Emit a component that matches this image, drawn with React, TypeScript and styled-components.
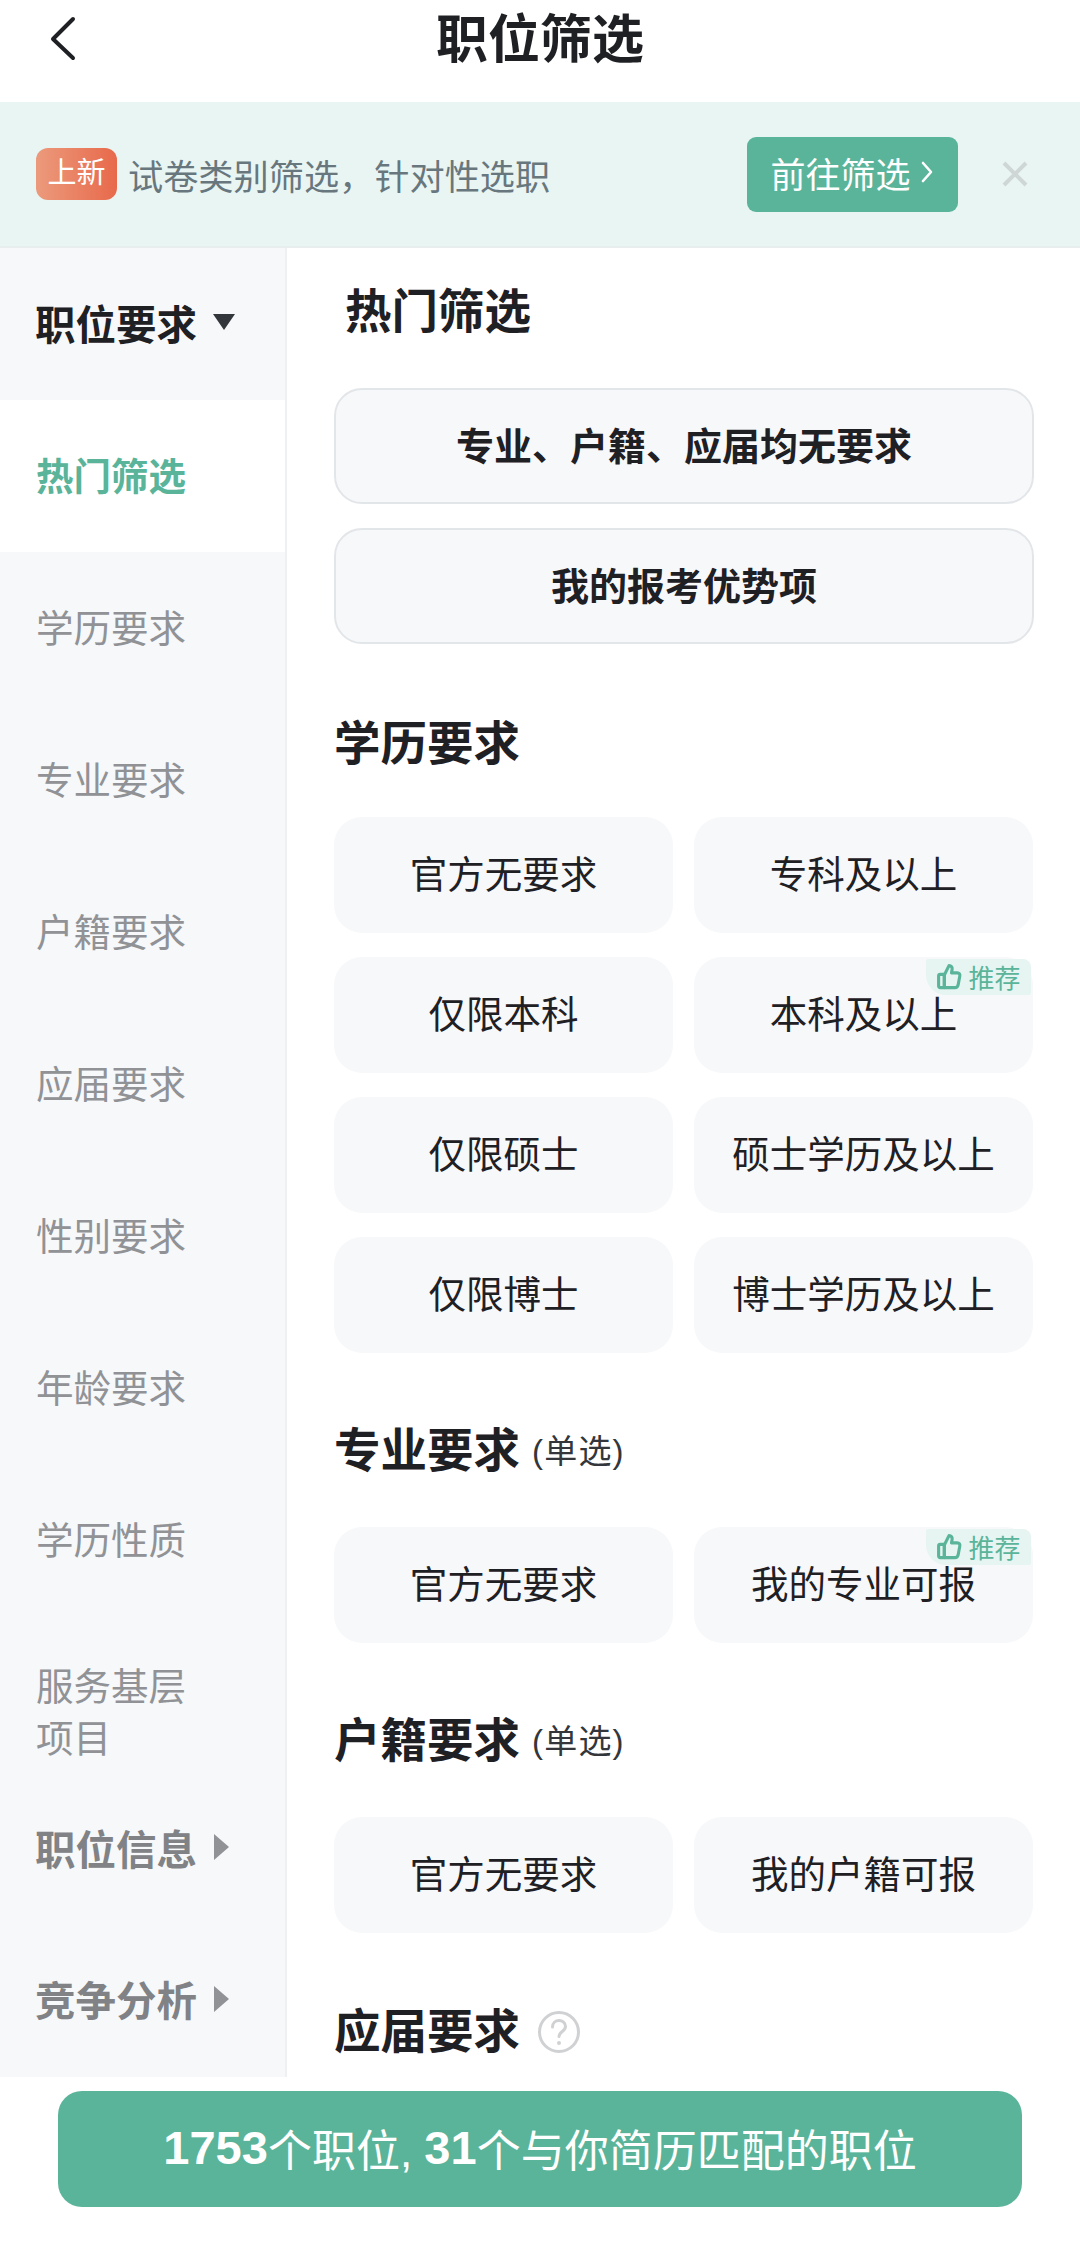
import { FunctionComponent, ReactNode } from 'react';
import styled, { createGlobalStyle } from 'styled-components';

const GlobalStyle = createGlobalStyle`
	html,
	body {
		margin: 0;
		padding: 0;
		background: #fff;
		font-family: 'Liberation Sans', 'Noto Sans CJK SC', sans-serif;
	}
	* {
		box-sizing: border-box;
	}
`;

const Page = styled.div`
	width: 1080px;
	height: 2250px;
	display: flex;
	flex-direction: column;
	overflow: hidden;
	background: #fff;
	color: #1f2024;
`;

const Header = styled.header`
	height: 102px;
	flex: none;
	position: relative;
	display: flex;
	justify-content: center;
	padding-top: 8px;
	font-size: 52px;
	line-height: 64px;
	font-weight: 700;
`;

const BackIcon = styled.svg`
	position: absolute;
	left: 48px;
	top: 16px;
	width: 32px;
	height: 46px;
`;

const Banner = styled.div`
	height: 146px;
	flex: none;
	display: flex;
	align-items: center;
	padding: 0 0 0 36px;
	background: #e9f5f3;
	border-bottom: 2px solid #e8eeee;
`;

const NewBadge = styled.span`
	width: 81px;
	height: 52px;
	border-radius: 12px;
	background: linear-gradient(90deg, #ec9a7c, #e8694b);
	color: #fff;
	font-size: 29px;
	line-height: 50px;
	text-align: center;
`;

const BannerText = styled.span`
	margin-left: 11px;
	font-size: 35.2px;
	color: #68777d;
	width: 619px;
	white-space: nowrap;
`;

const GoButton = styled.button`
	width: 211px;
	height: 75px;
	padding: 0 2px 4px 0;
	display: flex;
	align-items: center;
	justify-content: center;
	gap: 10px;
	border: none;
	border-radius: 9px;
	background: #5ab49a;
	color: #fff;
	font: inherit;
	font-size: 35px;
`;

const CloseIcon = styled.svg`
	width: 26px;
	height: 26px;
	margin-left: 44px;
`;

const Body = styled.div`
	flex: none;
	height: 1829px;
	display: flex;
	overflow: hidden;
`;

const Sidebar = styled.nav`
	width: 287px;
	flex: none;
	background: #f6f8fa;
	border-right: 2px solid #eef0f2;
`;

const Group = styled.div<{ $muted?: boolean; $height: number }>`
	height: ${p => p.$height}px;
	display: flex;
	align-items: center;
	gap: 15px;
	padding: 0 0 4px 35px;
	font-size: 40.5px;
	font-weight: 700;
	color: ${p => (p.$muted ? '#808285' : '#1f2024')};
`;

const NavItem = styled.div<{ $active?: boolean; $height?: number }>`
	height: ${p => p.$height ?? 152}px;
	display: flex;
	align-items: center;
	padding: 2px 90px 0 36px;
	font-size: 37.5px;
	line-height: 52px;
	font-weight: ${p => (p.$active ? 700 : 400)};
	color: ${p => (p.$active ? '#5ab49a' : '#909296')};
	background: ${p => (p.$active ? '#fff' : 'transparent')};
`;

const Content = styled.main`
	flex: 1;
	padding: 36px 46px 0 47px;
	overflow: hidden;
`;

const SectionTitle = styled.h2<{ $inset?: boolean; $gap: number }>`
	margin: 0 0 ${p => p.$gap}px;
	padding-left: ${p => (p.$inset ? 11 : 0)}px;
	height: 56px;
	display: flex;
	align-items: center;
	gap: 12px;
	font-size: 46.5px;
	line-height: 56px;
	font-weight: 700;
`;

const TitleNote = styled.span`
	font-size: 33px;
	font-weight: 400;
	letter-spacing: 1.2px;
	margin-top: 2px;
	color: #33363a;
`;

const HotList = styled.div`
	display: flex;
	flex-direction: column;
	gap: 24px;
	margin-bottom: 72px;
`;

const HotButton = styled.div`
	height: 116px;
	display: flex;
	align-items: center;
	justify-content: center;
	padding-bottom: 5px;
	border: 2px solid #e3e6e9;
	border-radius: 28px;
	background: #f7f8fa;
	font-size: 38px;
	font-weight: 700;
`;

const OptionGrid = styled.div<{ $after: number }>`
	display: grid;
	grid-template-columns: 339px 339px;
	gap: 24px 21px;
	margin-bottom: ${p => p.$after}px;
`;

const Option = styled.div`
	position: relative;
	height: 116px;
	display: flex;
	align-items: center;
	justify-content: center;
	padding: 0 0 8px 0;
	border-radius: 28px;
	background: #f7f8fa;
	font-size: 37.5px;
`;

const RecommendTag = styled.span`
	position: absolute;
	right: 2px;
	top: 2px;
	width: 105px;
	height: 36px;
	display: flex;
	align-items: center;
	justify-content: center;
	gap: 6px;
	padding-bottom: 2px;
	border-radius: 2px 8px 2px 20px;
	background: #e6f5f1;
	color: #5ab49a;
	font-size: 26px;
`;

const ThumbIcon = styled.svg`
	width: 26px;
	height: 27px;
`;

const HelpIcon = styled.svg`
	width: 44px;
	height: 44px;
	margin-left: 5px;
`;

const Footer = styled.div`
	flex: none;
	padding: 14px 58px 0;
`;

const SubmitButton = styled.div`
	height: 116px;
	display: flex;
	align-items: center;
	justify-content: center;
	padding-bottom: 3px;
	border-radius: 24px;
	background: #5ab49a;
	color: #fff;
	font-size: 44px;
	white-space: pre;
`;

const Strong = styled.b`
	font-size: 47px;
`;

const Triangle = ({ dir, color }: { dir: 'down' | 'right'; color: string }) => (
	<svg width={dir === 'down' ? 24 : 18} height={dir === 'down' ? 18 : 28} viewBox={dir === 'down' ? '0 0 24 18' : '0 0 18 28'}>
		<path d={dir === 'down' ? 'M1 1h22L12 17z' : 'M2 1l15 13L2 27z'} fill={color} />
	</svg>
);

const OptionCard: FunctionComponent<{ label: string; recommended?: boolean }> = ({ label, recommended }) => (
	<Option>
		{label}
		{recommended && (
			<RecommendTag>
				<ThumbIcon viewBox="0 0 24 26" fill="none" stroke="#5ab49a" strokeWidth="3" strokeLinejoin="round" strokeLinecap="round">
					<path d="M7.5 11.5L12 2.5c2.2 0 3.4 1.6 3 3.8L14.4 9.5H20c1.8 0 2.8 1.4 2.4 3l-1.6 8.6c-.4 1.6-1.4 2.6-3 2.6H7.5z" />
					<path d="M2 12.5c0-1 .6-1.6 1.6-1.6h3.9v12.8H3.6c-1 0-1.6-.6-1.6-1.6z" />
				</ThumbIcon>
				推荐
			</RecommendTag>
		)}
	</Option>
);

const Section: FunctionComponent<{ title: ReactNode; after: number; gap: number; children: ReactNode }> = ({ title, after, gap, children }) => (
	<>
		<SectionTitle $gap={gap}>{title}</SectionTitle>
		<OptionGrid $after={after}>{children}</OptionGrid>
	</>
);

const navItems = ['学历要求', '专业要求', '户籍要求', '应届要求', '性别要求', '年龄要求', '学历性质'];

export default function App() {
	return (
		<Page>
			<GlobalStyle />
			<Header>
				<BackIcon viewBox="0 0 32 46" fill="none" stroke="#1f2024" strokeWidth="4" strokeLinecap="round" strokeLinejoin="round">
					<path d="M25 3L5 23l20 19" />
				</BackIcon>
				职位筛选
			</Header>
			<Banner>
				<NewBadge>上新</NewBadge>
				<BannerText>试卷类别筛选，针对性选职</BannerText>
				<GoButton>
					前往筛选
					<svg width="12" height="24" viewBox="0 0 12 24" fill="none" stroke="#fff" strokeWidth="2.6" strokeLinecap="round" strokeLinejoin="round">
						<path d="M2 3l8 9-8 9" />
					</svg>
				</GoButton>
				<CloseIcon viewBox="0 0 26 26" fill="none" stroke="#cfd6d6" strokeWidth="4">
					<path d="M2 2l22 22M24 2L2 24" />
				</CloseIcon>
			</Banner>
			<Body>
				<Sidebar>
					<Group $height={152}>
						职位要求
						<Triangle dir="down" color="#33363a" />
					</Group>
					<NavItem $active>热门筛选</NavItem>
					{navItems.map(item => (
						<NavItem key={item}>{item}</NavItem>
					))}
					<NavItem $height={192}>服务基层项目</NavItem>
					<Group $muted $height={82}>
						职位信息
						<Triangle dir="right" color="#909296" />
					</Group>
					<Group $muted $height={221}>
						竞争分析
						<Triangle dir="right" color="#909296" />
					</Group>
				</Sidebar>
				<Content>
					<SectionTitle $inset $gap={48}>
						热门筛选
					</SectionTitle>
					<HotList>
						<HotButton>专业、户籍、应届均无要求</HotButton>
						<HotButton>我的报考优势项</HotButton>
					</HotList>
					<Section title="学历要求" gap={45} after={70}>
						<OptionCard label="官方无要求" />
						<OptionCard label="专科及以上" />
						<OptionCard label="仅限本科" />
						<OptionCard label="本科及以上" recommended />
						<OptionCard label="仅限硕士" />
						<OptionCard label="硕士学历及以上" />
						<OptionCard label="仅限博士" />
						<OptionCard label="博士学历及以上" />
					</Section>
					<Section
						title={
							<>
								专业要求<TitleNote>(单选)</TitleNote>
							</>
						}
						gap={48}
						after={70}
					>
						<OptionCard label="官方无要求" />
						<OptionCard label="我的专业可报" recommended />
					</Section>
					<Section
						title={
							<>
								户籍要求<TitleNote>(单选)</TitleNote>
							</>
						}
						gap={48}
						after={71}
					>
						<OptionCard label="官方无要求" />
						<OptionCard label="我的户籍可报" />
					</Section>
					<SectionTitle $gap={48}>
						应届要求
						<HelpIcon viewBox="0 0 44 44" fill="none">
							<circle cx="22" cy="22" r="19.5" stroke="#cfd1d3" strokeWidth="3" />
							<path d="M15.5 17c0-4 3-6.5 6.5-6.5s6.5 2.5 6.5 6c0 5-6.5 5-6.5 10" stroke="#cfd1d3" strokeWidth="3" strokeLinecap="round" />
							<circle cx="22" cy="33" r="2" fill="#cfd1d3" />
						</HelpIcon>
					</SectionTitle>
				</Content>
			</Body>
			<Footer>
				<SubmitButton>
					<Strong>1753</Strong>个职位, <Strong>31</Strong>个与你简历匹配的职位
				</SubmitButton>
			</Footer>
		</Page>
	);
}
